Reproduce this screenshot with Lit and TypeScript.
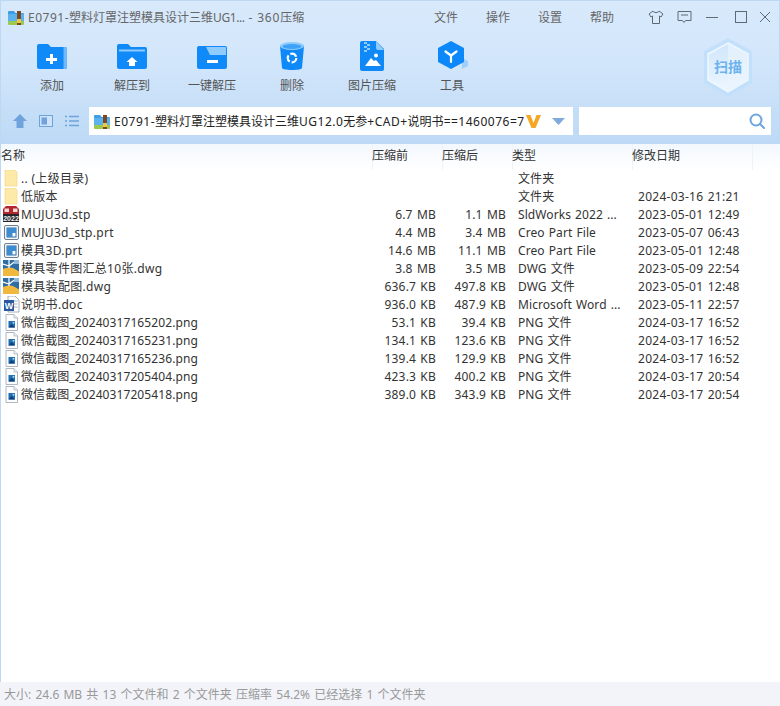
import { LitElement, html, css, svg } from "lit";
import { customElement } from "lit/decorators.js";

type Row = { n: string; k: string; s: string; c: string; t: string; d: string };

const rows: Row[] = [
  { n: ".. (上级目录)", k: "folder", s: "", c: "", t: "文件夹", d: "" },
  { n: "低版本", k: "folder", s: "", c: "", t: "文件夹", d: "2024-03-16 21:21" },
  { n: "MUJU3d.stp", k: "sw", s: "6.7 MB", c: "1.1 MB", t: "SldWorks 2022 ...", d: "2023-05-01 12:49" },
  { n: "MUJU3d_stp.prt", k: "creo", s: "4.4 MB", c: "3.4 MB", t: "Creo Part File", d: "2023-05-07 06:43" },
  { n: "模具3D.prt", k: "creo", s: "14.6 MB", c: "11.1 MB", t: "Creo Part File", d: "2023-05-01 12:48" },
  { n: "模具零件图汇总10张.dwg", k: "dwg", s: "3.8 MB", c: "3.5 MB", t: "DWG 文件", d: "2023-05-09 22:54" },
  { n: "模具装配图.dwg", k: "dwg", s: "636.7 KB", c: "497.8 KB", t: "DWG 文件", d: "2023-05-01 12:48" },
  { n: "说明书.doc", k: "doc", s: "936.0 KB", c: "487.9 KB", t: "Microsoft Word ...", d: "2023-05-11 22:57" },
  { n: "微信截图_20240317165202.png", k: "png", s: "53.1 KB", c: "39.4 KB", t: "PNG 文件", d: "2024-03-17 16:52" },
  { n: "微信截图_20240317165231.png", k: "png", s: "134.1 KB", c: "123.6 KB", t: "PNG 文件", d: "2024-03-17 16:52" },
  { n: "微信截图_20240317165236.png", k: "png", s: "139.4 KB", c: "129.9 KB", t: "PNG 文件", d: "2024-03-17 16:52" },
  { n: "微信截图_20240317205404.png", k: "png", s: "423.3 KB", c: "400.2 KB", t: "PNG 文件", d: "2024-03-17 20:54" },
  { n: "微信截图_20240317205418.png", k: "png", s: "389.0 KB", c: "343.9 KB", t: "PNG 文件", d: "2024-03-17 20:54" },
];

const fileIcons: Record<string, unknown> = {
  folder: svg`<path d="M2 1h10l2 2v14H2z" fill="#fdeaa9"/><path d="M2 1v16h12V3l-2-2z" fill="none" stroke="#f5d98a" stroke-width=".8"/>`,
  sw: svg`<path d="M0 4l3-3h10l3 3v6H0z" fill="#b3262b"/><rect x="1.500" y="3.500" width="4.500" height="3.500" fill="#f3d6d6"/><rect x="10" y="3.500" width="4.500" height="3.500" fill="#f3d6d6"/><rect x="0" y="9" width="16" height="8" fill="#24262c"/><text x="8" y="15.800" text-anchor="middle" font-size="7" font-weight="700" fill="#f2f2f2" font-family="Liberation Sans, sans-serif">2022</text>`,
  creo: svg`<rect x="1.500" y="2.500" width="14" height="14" rx="1.500" fill="#f3f6f9" stroke="#6e7f90"/><rect x="4" y="5" width="9" height="9" fill="#fff" stroke="#2b6ca8"/><path d="M4 5h9v5H9.500v4H4z" fill="#3d8bd0"/>`,
  dwg: svg`<rect x="0" y="1" width="16" height="16" fill="#2f6ea5"/><path d="M0 10c5-2 8-2 11-.5l5 3V17H0z" fill="#f0b93e"/><path d="M0 5l6 2M6 1v8M6 7l8-6" stroke="#fff" stroke-width="1.200" fill="none"/><rect x="11" y="1" width="5" height="4" fill="#8fb9d9"/>`,
  doc: svg`<path d="M5 1h7l4 4v12H5z" fill="#fff" stroke="#8c99a8" stroke-width=".8"/><path d="M10.500 6h4M10.500 9h4M10.500 12h4" stroke="#9cb3ca"/><rect x="1" y="5" width="10" height="11" fill="#2a5a9e"/><text x="6" y="14" text-anchor="middle" font-size="9" font-weight="700" fill="#fff" font-family="Liberation Sans, sans-serif">W</text>`,
  png: svg`<path d="M3 1.500h8l3.500 3.500v12.500H3z" fill="#fdfdfe" stroke="#9aa6b2" stroke-width=".8"/><path d="M11 1.500V5h3.500" fill="#e8edf2" stroke="#9aa6b2" stroke-width=".6"/><rect x="5.500" y="8" width="6.500" height="6.500" fill="#1f6fb5"/><path d="M5.500 14.500l3-3.500 3.500 3.500z" fill="#0d3f78"/><circle cx="10.500" cy="9.700" r="1" fill="#a8d4f0"/>`,
};

const zip = svg`<path d="M0 3a1 1 0 011-1h5l1.500 2H15a1 1 0 011 1v7H0z" fill="#3f9fe6"/><rect x="0" y="5" width="16" height="7" fill="#5cb2ee"/><path d="M0 12h16v3a1 1 0 01-1 1H1a1 1 0 01-1-1z" fill="#9cc94f"/><rect x="9" y="2" width="4" height="14" fill="#7b4a22"/><rect x="9" y="10" width="4" height="4" fill="#f4c543"/>`;

const tools: [string, unknown][] = [
  ["添加", svg`<path d="M0 5a2 2 0 012-2h9l3 3h14a2 2 0 012 2v18a2 2 0 01-2 2H2a2 2 0 01-2-2z" fill="#1089f9"/><path d="M26.500 6H28a2 2 0 012 2v18a2 2 0 01-2 2h-1.500z" fill="#6fb8fa"/><path d="M13 13h3v4h4v3h-4v3h-3v-3H9v-3h4z" fill="#fff"/>`],
  ["解压到", svg`<path d="M0 5a2 2 0 012-2h9l3 3h14a2 2 0 012 2v18a2 2 0 01-2 2H2a2 2 0 01-2-2z" fill="#1089f9"/><rect x="2" y="8.500" width="26" height="2" fill="#8fcbfc"/><path d="M15 16l5.500 5H18v4h-6v-4H9.500z" fill="#fff"/>`],
  ["一键解压", svg`<rect x="0" y="5" width="30" height="23" rx="2" fill="#1089f9"/><path d="M9 6h19a1 1 0 011 1v7H13z" fill="#8fcbfc"/><rect x="10" y="19" width="11" height="3" fill="#fff"/>`],
  ["删除", svg`<path d="M3 5l2 22c0 1 4 2 10 2s10-1 10-2l2-22z" fill="#0e89fa"/><ellipse cx="15" cy="5" rx="12" ry="4" fill="#8fcbfc"/><ellipse cx="15" cy="5.500" rx="9.500" ry="2.500" fill="#3ea2f8"/><circle cx="15" cy="17" r="4.300" fill="none" stroke="#fff" stroke-width="2.200" stroke-dasharray="7 2"/>`],
  ["图片压缩", svg`<path d="M5 0h14l8 8v20a2 2 0 01-2 2H5a2 2 0 01-2-2V2a2 2 0 012-2z" fill="#0f88f8"/><path d="M19 0l8 9h-6a2 2 0 01-2-2z" fill="#8fcbfc"/><path d="M7 1h3v2H7zM10 3h3v2h-3zM7 5h3v2H7zM10 7h3v2h-3zM7 9h3v2H7z" fill="#8fcbfc"/><path d="M8 25l6-8 3 3 2-1 5 6z" fill="#fff"/><circle cx="19" cy="14.500" r="2" fill="#fff"/>`],
  ["工具", svg`<path d="M25 17l6 3v5l-6 3z" fill="#9fd0fb"/><path d="M14 0l13 7v14l-13 7-13-7V7z" fill="#0d88fb"/><path d="M14 14.500L8.500 10.500M14 14.500l5.500-4M14 14.500V21" stroke="#fff" stroke-width="2.200" fill="none" stroke-linecap="round"/>`],
];

@customElement("app-root")
export class AppRoot extends LitElement {
  static styles = css`
    :host {
      display: block;
      width: 780px;
      height: 706px;
      overflow: hidden;
      font-family: "Noto Sans", "Noto Sans CJK SC", sans-serif;
      font-size: 12px;
      color: #333;
    }
    .win {
      position: relative;
      display: flex;
      flex-direction: column;
      height: 706px;
      background: #fff;
    }
    .head {
      height: 144px;
      flex: none;
      box-sizing: border-box;
      border-top: 1px solid #bcd8f2;
      border-left: 1px solid #bcd8f2;
      border-right: 1px solid #bcd8f2;
      background: linear-gradient(180deg, #d8e9fb 0%, #d2e6fb 45%, #c8e0f8 70%, #bcd9f5 100%);
      display: flex;
      flex-direction: column;
    }
    .wide { letter-spacing: 0.5px; }
    .tight { letter-spacing: -0.4px; }
    .wider { letter-spacing: 0.8px; }
    .title {
      height: 31px;
      flex: none;
      display: flex;
      align-items: center;
      padding-left: 7px;
      color: #666;
    }
    .title .logo { width: 16px; height: 16px; margin-right: 4px; flex: none; }
    .title .name { width: 406px; flex: none; white-space: nowrap; }
    .menu { display: flex; gap: 28px; width: 180px; flex: none; }
    .menu span { width: 24px; white-space: nowrap; color: #666; }
    .ctl { display: flex; align-items: center; margin-left: 34px; }
    .ctl svg { display: block; fill: none; stroke: #5f6a75; stroke-width: 1; }
    .gap13 { margin-left: 13px; }
    .gap14 { margin-left: 14px; }
    .gap16 { margin-left: 16px; }
    .gap12 { margin-left: 12px; }
    .tools {
      display: flex;
      padding-left: 11px;
      height: 62px;
      flex: none;
    }
    .tool {
      width: 80px;
      display: flex;
      flex-direction: column;
      align-items: center;
      color: #555;
    }
    .tool svg { width: 31px; height: 30px; margin-top: 9px; display: block; overflow: visible; }
    .tool span { margin-top: 7px; line-height: 16px; white-space: nowrap; }
    .nav {
      display: flex;
      align-items: center;
      height: 28px;
      margin-top: 13px;
      flex: none;
    }
    .navicons { display: flex; width: 88px; padding-left: 12px; box-sizing: border-box; gap: 12px; flex: none; }
    .navicons svg { width: 14px; height: 14px; display: block; }
    .addr {
      width: 484px;
      height: 28px;
      flex: none;
      background: #fff;
      display: flex;
      align-items: center;
      padding-left: 5px;
      box-sizing: border-box;
      color: #222;
    }
    .addr .logo { width: 16px; height: 16px; margin-right: 4px; flex: none; }
    .addr .txt { white-space: nowrap; }
    .addr .v { width: 15px; height: 15px; flex: none; margin-left: 1px; }
    .addr .tri { width: 13px; height: 7px; flex: none; margin-left: 11px; fill: #7eaadc; }
    .search {
      width: 192px;
      height: 28px;
      margin-left: 6px;
      flex: none;
      background: #fff;
      display: flex;
      align-items: center;
      justify-content: flex-end;
      padding-right: 6px;
      box-sizing: border-box;
    }
    .search svg { width: 16px; height: 16px; fill: none; stroke: #6ea6df; stroke-width: 2; }
    .badge { position: absolute; left: 702px; top: 37px; width: 52px; height: 60px; }
    .badge-label {
      position: absolute;
      left: 702px;
      top: 56px;
      width: 52px;
      text-align: center;
      font-size: 14px;
      font-weight: 700;
      line-height: 22px;
      color: #6cb3ee;
    }
    .body {
      flex: 1;
      display: flex;
      flex-direction: column;
      border-left: 1px solid #bcd8f2;
      min-height: 0;
    }
    .list { flex: 1; }
    .cols {
      height: 26px;
      flex: none;
      display: grid;
      grid-template-columns: 371px 70px 70px 120px 120px 1fr;
      background: linear-gradient(180deg, #f2f8fe 0%, #fff 100%);
      color: #333;
    }
    .cols span {
      display: flex;
      align-items: center;
      padding-bottom: 4px;
      box-shadow: inset 1px 0 0 #eef3f9;
      white-space: nowrap;
    }
    .cols span:first-child { box-shadow: none; }
    .row {
      height: 18px;
      display: grid;
      grid-template-columns: 2px 18px 1fr 65px 70px 12px 120px 120px 22px;
      align-items: center;
      color: #333;
      white-space: nowrap;
      line-height: 18px;
    }
    .row svg { width: 18px; height: 18px; display: block; grid-column: 2; }
    .row .n { grid-column: 3; letter-spacing: 0.3px; }
    .row.png .n { letter-spacing: 0.09px; }
    .row .s, .row .c { text-align: right; letter-spacing: 0.2px; word-spacing: 0.9px; }
    .row .t { grid-column: 7; letter-spacing: 0.08px; word-spacing: 0.9px; }
    .row .d { grid-column: 8; letter-spacing: 0.27px; word-spacing: 0.9px; }
    .status {
      height: 24px;
      flex: none;
      background: #f2f4f9;
      color: #999;
      display: flex;
      align-items: center;
      padding-left: 4px;
      white-space: nowrap;
      word-spacing: 1.1px;
    }
  `;

  render() {
    return html`<div class="win">
      <div class="head">
        <div class="title">
          <svg class="logo" viewBox="0 0 16 16">${zip}</svg>
          <span class="name"><span class="wide">E0791-</span>塑料灯罩注塑模具设计三维<span class="tight">UG1...</span><span class="wider"> - 360</span>压缩</span>
          <div class="menu"><span>文件</span><span>操作</span><span>设置</span><span>帮助</span></div>
          <div class="ctl">
            <svg width="16" height="16" viewBox="0 0 16 16"><path d="M5 2L1 5l2 3 1.500-1v7.500h7V7L13 8l2-3-4-3c-.5 2-5.500 2-6 0z"/></svg>
            <svg class="gap13" width="15" height="14" viewBox="0 0 15 14"><path d="M1 1.500h13v9H8.500L7 12.500 5.500 10.500H1zM4 5h7"/></svg>
            <svg class="gap14" width="13" height="14" viewBox="0 0 13 14"><path d="M0 7.500h12"/></svg>
            <svg class="gap16" width="12" height="12" viewBox="0 0 12 12"><rect x=".5" y=".5" width="11" height="11"/></svg>
            <svg class="gap12" width="12" height="12" viewBox="0 0 12 12"><path d="M1 1l10 10M11 1L1 11"/></svg>
          </div>
        </div>
        <div class="tools">
          ${tools.map(([l, i]) => html`<div class="tool"><svg viewBox="0 0 31 30">${i}</svg><span>${l}</span></div>`)}
        </div>
        <div class="nav">
          <div class="navicons">
            <svg viewBox="0 0 14 14"><path d="M7 0l7 7h-3.500v7h-7V7H0z" fill="#6ea3dd"/></svg>
            <svg viewBox="0 0 14 14"><rect x=".5" y="1.500" width="13" height="11" fill="#cfe2f6" stroke="#6ea3dd"/><rect x="2.500" y="3.500" width="5.500" height="7" fill="#6ea3dd"/></svg>
            <svg viewBox="0 0 14 14"><path d="M0 2.500h2M4 2.500h10M0 7h2M4 7h10M0 11.500h2M4 11.500h10" stroke="#6ea3dd" stroke-width="1.500"/></svg>
          </div>
          <div class="addr">
            <svg class="logo" viewBox="0 0 16 16">${zip}</svg>
            <span class="txt"><span class="wide">E0791-</span>塑料灯罩注塑模具设计三维<span class="wide">UG12.0</span>无参<span class="wide">+CAD+</span>说明书<span class="wide">==1460076=7</span></span>
            <svg class="v" viewBox="0 0 15 15"><path d="M0 1h4.500l3 8 3-8H15L9.500 14h-4z" fill="#f5a623"/></svg>
            <svg class="tri" viewBox="0 0 13 7"><path d="M0 0h13L6.500 7z"/></svg>
          </div>
          <div class="search">
            <svg viewBox="0 0 16 16"><circle cx="7" cy="7" r="5.500"/><path d="M11 11l4 4" stroke-linecap="round"/></svg>
          </div>
        </div>
      </div>
      <svg class="badge" viewBox="0 0 52 60">
        <defs>
          <linearGradient id="bg" x1="0" y1="0" x2="0" y2="1"><stop offset="0" stop-color="#cfe6fb"/><stop offset="1" stop-color="#eef7ff"/></linearGradient>
        </defs>
        <path d="M26 1l24 13v32L26 59 2 46V14z" fill="#bedffa" opacity=".8"/>
        <path d="M26 6l20 11v26L26 55 6 43V17z" fill="url(#bg)" stroke="#f0f8ff" stroke-width="1.500"/>
        <path d="M26 6l20 11v26L26 55z" fill="#e9f4fe" opacity=".7"/>
      </svg>
      <div class="badge-label">扫描</div>
      <div class="body">
        <div class="cols">
          <span>名称</span><span>压缩前</span><span>压缩后</span><span>类型</span><span>修改日期</span><span></span>
        </div>
        <div class="list">
          ${rows.map(
            (r) => html`<div class="row ${r.k}">
              <svg viewBox="0 1 18 18">${fileIcons[r.k]}</svg>
              <span class="n">${r.n}</span>
              <span class="s">${r.s}</span>
              <span class="c">${r.c}</span>
              <span class="t">${r.t}</span>
              <span class="d">${r.d}</span>
            </div>`
          )}
        </div>
      </div>
      <div class="status">大小: 24.6 MB 共 13 个文件和 2 个文件夹 压缩率 54.2% 已经选择 1 个文件夹</div>
    </div>`;
  }
}
